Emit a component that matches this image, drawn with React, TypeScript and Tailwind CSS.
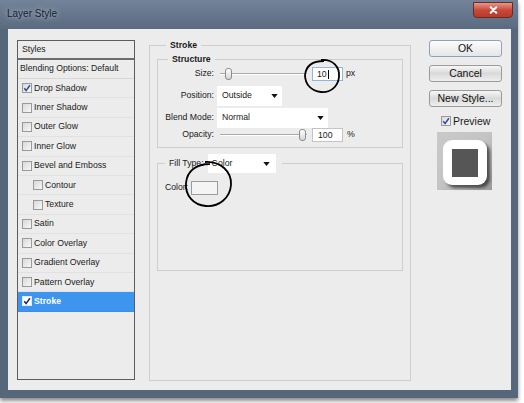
import React from 'react';

// Photoshop "Layer Style" dialog, Stroke tab

type StyleRow = { label: string; checked?: boolean; indent?: boolean; selected?: boolean };

const styleRows: StyleRow[] = [
  { label: 'Drop Shadow', checked: true },
  { label: 'Inner Shadow' },
  { label: 'Outer Glow' },
  { label: 'Inner Glow' },
  { label: 'Bevel and Emboss' },
  { label: 'Contour', indent: true },
  { label: 'Texture', indent: true },
  { label: 'Satin' },
  { label: 'Color Overlay' },
  { label: 'Gradient Overlay' },
  { label: 'Pattern Overlay' },
  { label: 'Stroke', checked: true, selected: true },
];

function Check({ on, light }: { on?: boolean; light?: boolean }) {
  return (
    <span
      className={
        'flex h-[10px] w-[10px] shrink-0 items-center justify-center border ' +
        (light ? 'border-[#dfe9f5] bg-white' : 'border-[#9a9a9a] bg-gradient-to-br from-[#d9d9d9] to-[#f7f7f7]')
      }
    >
      {on && (
        <svg viewBox="0 0 8 8" className="h-[8px] w-[8px]">
          <path d="M1.2 4.3 L3.1 6.6 L6.9 1.2" fill="none" stroke={light ? '#1b2b55' : '#2a4dab'} strokeWidth="1.5" />
        </svg>
      )}
    </span>
  );
}

function Arrow() {
  return (
    <svg viewBox="0 0 8 5" className="h-[4px] w-[7px]">
      <path d="M0 0 H8 L4 5 Z" fill="#111" />
    </svg>
  );
}

function Slider({ thumb }: { thumb: string }) {
  return (
    <div className="relative ml-[6px] h-[14px] w-[87px]">
      <div className="absolute left-0 right-0 top-[6px] h-[2px] border-t border-[#a9a9a9] bg-white" />
      <div className={'absolute top-[1px] h-[12px] w-[7px] rounded-[3px] border border-[#8c8c8c] bg-gradient-to-b from-white to-[#d5d5d5] ' + thumb} />
    </div>
  );
}

function Btn({ children, def }: { children: React.ReactNode; def?: boolean }) {
  return (
    <div
      className={
        'flex w-[73px] items-center justify-center rounded-[3px] border text-[10.5px] leading-none text-[#111] ' +
        (def
          ? 'h-[17px] border-[#8fa2bd] bg-gradient-to-b from-[#fbfbfb] to-[#e6e6e6]'
          : 'h-[17px] border-[#9a9a9a] bg-gradient-to-b from-[#f7f7f7] via-[#d9d9d9] to-[#efefef]')
      }
    >
      {children}
    </div>
  );
}

export default function App() {
  return (
    <div className="relative h-[403px] w-[524px] bg-white" style={{ fontFamily: '"Liberation Sans", Arial, sans-serif' }}>
      <div className="flex h-[398px] w-[518px] flex-col bg-[#56677c] shadow-[0_3px_4px_rgba(0,0,0,0.45)]">
        {/* title bar */}
        <div className="flex h-[29px] items-start justify-between bg-gradient-to-b from-[#72839a] to-[#5a6b80]">
          <span className="ml-[7px] mt-[9px] text-[10px] leading-none text-[#18222e] [text-shadow:0_0_5px_#c9d3de]">Layer Style</span>
          <div className="mr-[5px] mt-[2px] flex h-[16px] w-[40px] items-center justify-center rounded-b-[4px] border border-[#6b2a22] bg-gradient-to-b from-[#e6978a] via-[#c9483a] to-[#b83a2a]">
            <svg viewBox="0 0 10 10" className="h-[8px] w-[9px]">
              <path d="M1.5 1.5 L8.5 8.5 M8.5 1.5 L1.5 8.5" stroke="white" strokeWidth="2.4" strokeLinecap="round" />
            </svg>
          </div>
        </div>

        {/* client area */}
        <div className="ml-[8px] flex h-[361px] w-[503px] bg-[#ececec] pl-[9px] pt-[11px] text-[8.7px] text-[#1a1a1a]">
          {/* styles list */}
          <div className="flex h-[340px] w-[118px] flex-col border border-[#5c5c5c] bg-[#ececec]">
            <div className="flex h-[19px] items-center border-b-2 border-[#6d6d6d] pl-[4px]">Styles</div>
            <div className="flex h-[19px] items-center border-b border-[#d7d7d7] pl-[2px]">Blending Options: Default</div>
            {styleRows.map((r) => (
              <div
                key={r.label}
                className={
                  'flex h-[19.4px] items-center gap-[2px] border-b ' +
                  (r.selected ? 'border-[#3a8ee6] bg-[#3d95ee] font-bold text-white' : 'border-[#e1e1e1]') +
                  (r.indent ? ' pl-[15px]' : ' pl-[4px]')
                }
              >
                <Check on={r.checked} light={r.selected} />
                <span>{r.label}</span>
              </div>
            ))}
          </div>

          {/* stroke settings */}
          <fieldset className="ml-[14px] h-[341px] w-[262px] border border-[#cdcdcd] px-[7px]">
            <legend className="ml-[9px] px-[4px] text-[8.7px] font-bold leading-[10px]">Stroke</legend>

            <fieldset className="mt-[4px] h-[94px] border border-[#cdcdcd]">
              <legend className="ml-[10px] px-[4px] font-bold leading-[10px]">Structure</legend>
              <div className="flex flex-col pt-[3px]">
                <div className="flex h-[14px] items-center">
                  <span className="w-[56px] text-right">Size:</span>
                  <Slider thumb="left-[5px]" />
                  <div className="ml-[5px] flex h-[14px] w-[31px] items-center border border-[#8fb6dc] bg-white pl-[4px] leading-none">
                    10<span className="ml-[1px] h-[9px] w-px bg-black" />
                  </div>
                  <span className="ml-[3px]">px</span>
                </div>
                <div className="mt-[5px] flex h-[20px] items-center">
                  <span className="w-[56px] text-right">Position:</span>
                  <div className="ml-[3px] flex h-[20px] w-[65px] items-center justify-between bg-white pl-[5px] pr-[4px]">
                    <span>Outside</span>
                    <Arrow />
                  </div>
                </div>
                <div className="mt-[2px] flex h-[20px] items-center">
                  <span className="w-[56px] text-right">Blend Mode:</span>
                  <div className="ml-[3px] flex h-[20px] w-[111px] items-center justify-between bg-white pl-[5px] pr-[4px]">
                    <span>Normal</span>
                    <Arrow />
                  </div>
                </div>
                <div className="flex h-[14px] items-center">
                  <span className="w-[56px] text-right">Opacity:</span>
                  <Slider thumb="left-[79px]" />
                  <div className="ml-[5px] flex h-[14px] w-[31px] items-center border border-[#c4c4c4] bg-white pl-[5px] leading-none">100</div>
                  <span className="ml-[4px]">%</span>
                </div>
              </div>
            </fieldset>

            <fieldset className="mt-[6px] h-[117px] border border-[#cdcdcd]">
              <legend className="ml-[7px] flex items-center pl-[4px] pr-[6px]">
                <span>Fill Type:</span>
                <div className="ml-[4px] flex h-[19px] w-[68px] items-center justify-between bg-white pl-[4px] pr-[6px]">
                  <span>Color</span>
                  <Arrow />
                </div>
              </legend>
              <div className="flex items-center pl-[7px] pt-[8px]">
                <span>Color:</span>
                <div className="ml-[3px] h-[14px] w-[27px] border border-[#9c9c9c] bg-[#f4f4f4]" />
              </div>
            </fieldset>
          </fieldset>

          {/* buttons + preview */}
          <div className="ml-[18px] flex w-[73px] flex-col pt-[0px]">
            <Btn def>OK</Btn>
            <div className="mt-[8px]">
              <Btn>Cancel</Btn>
            </div>
            <div className="mt-[8px]">
              <Btn>New Style...</Btn>
            </div>
            <div className="mt-[8px] flex items-center gap-[2px] pl-[12px] text-[10.5px] leading-[12px]">
              <Check on />
              <span>Preview</span>
            </div>
            <div className="ml-[8px] mt-[5px] flex h-[58px] w-[55px] items-start justify-start bg-gradient-to-br from-[#c9c9c9] via-[#c4c4c4] to-[#9a9a9a] pl-[6px] pt-[8px]">
              <div className="flex h-[45px] w-[44px] items-center justify-center rounded-[9px] bg-white shadow-[3px_3px_3px_rgba(0,0,0,0.55)]">
                <div className="h-[28px] w-[26px] bg-[#565656]" />
              </div>
            </div>
          </div>
        </div>
      </div>

      {/* hand-drawn marker circles */}
      <svg className="pointer-events-none absolute left-0 top-0" width="524" height="403">
        <path
          d="M321 60 C333 59 340 67 339 77 C338 87 330 93 321 92 C311 91 305 84 305 75 C306 66 312 61 324 61"
          fill="none"
          stroke="#000"
          strokeWidth="1.8"
        />
        <path
          d="M205 162 C221 161 232 172 231 185 C230 198 219 207 206 206 C193 205 185 195 186 183 C187 171 196 164 210 164"
          fill="none"
          stroke="#000"
          strokeWidth="1.8"
        />
      </svg>
    </div>
  );
}
